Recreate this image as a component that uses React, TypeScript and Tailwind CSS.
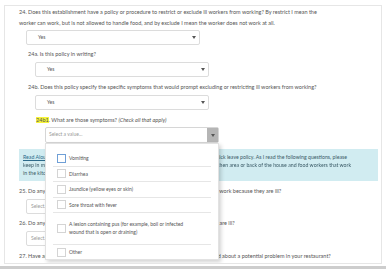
import React from "react";

const Caret = () => (
  <svg width="4" height="3" viewBox="0 0 4 3" className="block">
    <path d="M0 0 L4 0 L2 3 Z" fill="#555" />
  </svg>
);

function YesSelect({ value, placeholder }: { value?: string; placeholder?: boolean }) {
  return (
    <div className="relative flex h-[15px] w-[174px] items-center rounded-[2px] border border-[#dcdcdc] bg-white">
      {placeholder ? (
        <span className="pl-[4px] text-[5px] text-[#9a9a9a]">Select...</span>
      ) : (
        <span className="pl-[11px] text-[5px] text-[#555]">{value}</span>
      )}
      <div className="ml-auto mr-[3px]">
        <Caret />
      </div>
    </div>
  );
}

const items: string[][] = [
  ["Vomiting"],
  ["Diarrhea"],
  ["Jaundice (yellow eyes or skin)"],
  ["Sore throat with fever"],
  ["A lesion containing pus (for example, boil or infected", "wound that is open or draining)"],
  ["Other"],
];

export default function App() {
  return (
    <div className="relative h-[273px] w-[386px] overflow-hidden bg-white font-['Lato',sans-serif] text-[#555]">
      <div className="ml-[4px] mt-[5px] h-[259px] w-[378px] overflow-hidden border border-[#e6e6e6] pl-[14px] pr-[3px] pt-[1px]">
        <div className="text-[5.5px] leading-[11px]">
          24. Does this establishment have a policy or procedure to restrict or exclude ill workers from working? By restrict I mean the
          <br />
          worker can work, but is not allowed to handle food, and by exclude I mean the worker does not work at all.
        </div>
        <div className="ml-[7px] mt-[1px]">
          <YesSelect value="Yes" />
        </div>
        <div className="ml-[9px]">
          <div className="mt-[4px] text-[5.5px] leading-[11px]">24a. Is this policy in writing?</div>
          <div className="ml-[7px] mt-[2px]">
            <YesSelect value="Yes" />
          </div>
          <div className="mt-[5px] text-[5.5px] leading-[11px]">
            24b. Does this policy specify the specific symptoms that would prompt excluding or restricting ill workers from working?
          </div>
          <div className="ml-[7px] mt-[2px]">
            <YesSelect value="Yes" />
          </div>
          <div className="ml-[8px]">
            <div className="mt-[5px] text-[5.5px] leading-[11px]">
              <span className="bg-[#f7f43a]">24b1</span>. What are those symptoms? <i>(Check all that apply)</i>
            </div>
            <div className="relative ml-[9px] mt-[1px] w-[174px]">
              <div className="flex h-[16px] items-center rounded-[2px] border border-[#d6d6d6] bg-white">
                <span className="pl-[3px] text-[5px] text-[#9a9a9a]">Select a value...</span>
                <div className="ml-auto flex h-full w-[11px] items-center justify-center bg-[#b5b5b5]">
                  <Caret />
                </div>
              </div>
              <div className="absolute left-0 top-full z-10 h-[117px] w-[174px] border border-[#e2e2e2] bg-white pt-[7px] shadow-[2px_2px_4px_rgba(0,0,0,0.18)]">
                {items.map((lines, i) => (
                  <div
                    key={i}
                    className={`mx-[7px] flex items-center pl-[4px] ${i < items.length - 1 ? "border-b border-[#e6e6e6]" : ""} ${lines.length > 1 ? "h-[31.5px]" : "h-[15.5px]"}`}
                  >
                    <div
                      className={`h-[9px] w-[9px] shrink-0 border bg-white ${i === 0 ? "border-[#6f9fd6]" : "border-[#d4d4d4]"}`}
                    />
                    <div className="ml-[3px] text-[5px] leading-[8px] text-[#555]">
                      {lines.map((l, j) => (
                        <div key={j}>{l}</div>
                      ))}
                    </div>
                  </div>
                ))}
              </div>
            </div>
          </div>
        </div>
        <div className="mt-[6px] h-[32px] bg-[#d1ecf1] px-[4px] py-[4px] text-[5.2px] leading-[8px] text-[#3a5a66]">
          <div>
            <span className="text-[#2b6a8a] underline">Read Aloud:</span> Now I am going to ask you a couple questions about this establishment's sick leave policy. As I read the following questions, please
          </div>
          <div className="blur-[0.4px]">
            keep in mind that when I say "food workers", I mean all of the staff that work in the kitchen area or back of the house and food workers that work
          </div>
          <div>in the kitchen.</div>
        </div>
        <div className="mt-[5px] text-[5.5px] leading-[11px]">
          25. Do any food workers still get paid at this establishment, if a food worker misses work because they are ill?
        </div>
        <div className="ml-[7px] mt-[2px]">
          <YesSelect placeholder />
        </div>
        <div className="mt-[4px] text-[5.5px] leading-[11px]">
          26. Do any food workers at your establishment come in to work,{"\u00a0\u00a0"}even though they are ill?
        </div>
        <div className="ml-[7px] mt-[2px]">
          <YesSelect placeholder />
        </div>
        <div className="mt-[5px] text-[5.5px] leading-[11px]">
          27. Have any of the procedures or policies ever changed since you were last notified about a potential problem in your restaurant?
        </div>
      </div>
      <div className="mt-[2px] h-[3px] w-full bg-[#cdcdcd]" />
    </div>
  );
}
